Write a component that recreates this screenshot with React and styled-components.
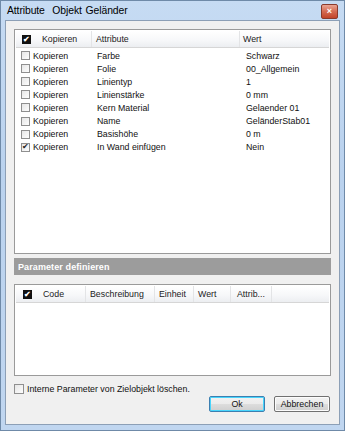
import React from "react";
import styled, { createGlobalStyle } from "styled-components";

const Global = createGlobalStyle`
  html, body { margin: 0; padding: 0; background: #fff; }
  body { font-family: "Liberation Sans", Arial, sans-serif; }
`;

const Frame = styled.div`
  width: 345px;
  height: 431px;
  box-sizing: border-box;
  border: 1px solid #6f8aa8;
  background: linear-gradient(#c6dbf3, #bad2ee 40%, #c0d6f0);
  padding: 0 4px 5px 4px;
  display: flex;
  flex-direction: column;
`;

const TitleBar = styled.div`
  height: 19px;
  display: flex;
  align-items: center;
  justify-content: space-between;
  padding: 0 2px 0 2px;
`;

const Title = styled.div`
  font-size: 10.4px;
  color: #000;
  letter-spacing: -0.1px;
  word-spacing: 1px;
`;

const CloseBtn = styled.div`
  width: 15px;
  height: 13px;
  margin-top: 1px;
  border: 1px solid #8a3a2c;
  border-radius: 2px;
  background: linear-gradient(#e9a493, #d46a52 50%, #c2442a);
  display: flex;
  align-items: center;
  justify-content: center;
  color: #fff;
  font-size: 9px;
  font-weight: bold;
  line-height: 1;
`;

const Client = styled.div`
  flex: 1;
  border: 1px solid #8c9fb6;
  background: #f0f0f0;
  padding: 8px 8px 10px 8px;
  display: flex;
  flex-direction: column;
`;

const ListBox = styled.div`
  border: 1px solid #9a9a9a;
  background: #fff;
  height: ${(p) => p.h}px;
  box-sizing: border-box;
  padding: 1px;
  display: flex;
  flex-direction: column;
`;

const Header = styled.div`
  display: flex;
  height: 16px;
  background: linear-gradient(#ffffff, #f6f7f9 60%, #eceef1);
  border-bottom: 1px solid #d6d6d6;
  font-size: 8.8px;
  color: #222;
`;

const HeadCell = styled.div`
  width: ${(p) => (p.w ? `${p.w}px` : "auto")};
  flex: ${(p) => (p.w ? "none" : 1)};
  border-right: ${(p) => (p.last ? "none" : "1px solid #e3e4e6")};
  display: flex;
  align-items: center;
  padding-left: ${(p) => p.pl || 4}px;
  box-sizing: border-box;
  white-space: nowrap;
`;

const HeadCheck = styled.span`
  width: 9px;
  height: 9px;
  background: #111;
  color: #fff;
  font-size: 8px;
  line-height: 9px;
  text-align: center;
  margin-right: 11px;
  font-weight: bold;
`;

const Rows = styled.div`
  padding-top: 1px;
  display: flex;
  flex-direction: column;
`;

const Row = styled.div`
  display: flex;
  height: 13.1px;
  align-items: center;
  font-size: 8.8px;
  color: #111;
`;

const Cell = styled.div`
  width: ${(p) => p.w}px;
  display: flex;
  align-items: center;
  padding-left: ${(p) => p.pl || 0}px;
  box-sizing: border-box;
  white-space: nowrap;
`;

const Box = styled.span`
  width: ${(p) => p.size || 9}px;
  height: ${(p) => p.size || 9}px;
  box-sizing: border-box;
  border: 1px solid #8f8f8f;
  background: linear-gradient(135deg, #e6e6e6, #fdfdfd);
  margin-right: 3px;
  display: inline-flex;
  align-items: center;
  justify-content: center;
  color: #222;
  font-size: 8px;
  line-height: 1;
`;

const SectionBar = styled.div`
  margin-top: 4px;
  height: 17px;
  background: #9c9c9c;
  color: #fff;
  font-weight: bold;
  font-size: 9px;
  display: flex;
  align-items: center;
  padding-left: 4px;
  letter-spacing: 0.1px;
`;

const Spacer = styled.div`
  height: ${(p) => p.h}px;
`;

const CheckLine = styled.div`
  display: flex;
  align-items: center;
  margin-top: 8px;
  font-size: 8.8px;
  color: #111;
`;

const Buttons = styled.div`
  display: flex;
  justify-content: flex-end;
  gap: 9px;
  margin-top: 2px;
  padding-right: 1px;
`;

const Button = styled.div`
  width: 56px;
  height: 16px;
  box-sizing: border-box;
  border: 1px solid ${(p) => (p.primary ? "#3c7fb1" : "#707070")};
  border-radius: 2px;
  background: linear-gradient(#f2f2f2, #ebebeb 50%, #dddddd 51%, #cfcfcf);
  box-shadow: inset 0 0 0 1px ${(p) => (p.primary ? "#48d5fc" : "#fcfcfc")};
  font-size: 8.8px;
  color: #111;
  display: flex;
  align-items: center;
  justify-content: center;
`;

const attrs = [
  ["Farbe", "Schwarz"],
  ["Folie", "00_Allgemein"],
  ["Linientyp", "1"],
  ["Linienstärke", "0 mm"],
  ["Kern Material", "Gelaender 01"],
  ["Name", "GeländerStab01"],
  ["Basishöhe", "0 m"],
  ["In Wand einfügen", "Nein"],
];

export default function App() {
  return (
    <>
      <Global />
      <Frame>
        <TitleBar>
          <Title>Attribute&nbsp; Objekt Geländer</Title>
          <CloseBtn>×</CloseBtn>
        </TitleBar>
        <Client>
          <ListBox h={225}>
            <Header>
              <HeadCell w={76} pl={6}>
                <HeadCheck>✔</HeadCheck>Kopieren
              </HeadCell>
              <HeadCell w={148}>Attribute</HeadCell>
              <HeadCell last pl={3}>Wert</HeadCell>
            </Header>
            <Rows>
              {attrs.map(([a, v], i) => (
                <Row key={a}>
                  <Cell w={81} pl={5}>
                    <Box>{i === attrs.length - 1 ? "✔" : ""}</Box>Kopieren
                  </Cell>
                  <Cell w={149}>{a}</Cell>
                  <Cell w={80}>{v}</Cell>
                </Row>
              ))}
            </Rows>
          </ListBox>
          <SectionBar>Parameter definieren</SectionBar>
          <Spacer h={9} />
          <ListBox h={92}>
            <Header>
              <HeadCell w={70} pl={7}>
                <HeadCheck>✔</HeadCheck>Code
              </HeadCell>
              <HeadCell w={69}>Beschreibung</HeadCell>
              <HeadCell w={39}>Einheit</HeadCell>
              <HeadCell w={37}>Wert</HeadCell>
              <HeadCell w={41} pl={6}>Attrib...</HeadCell>
              <HeadCell last />
            </Header>
          </ListBox>
          <CheckLine>
            <Box size={10} />
            Interne Parameter von Zielobjekt löschen.
          </CheckLine>
          <Buttons>
            <Button primary>Ok</Button>
            <Button>Abbrechen</Button>
          </Buttons>
        </Client>
      </Frame>
    </>
  );
}
